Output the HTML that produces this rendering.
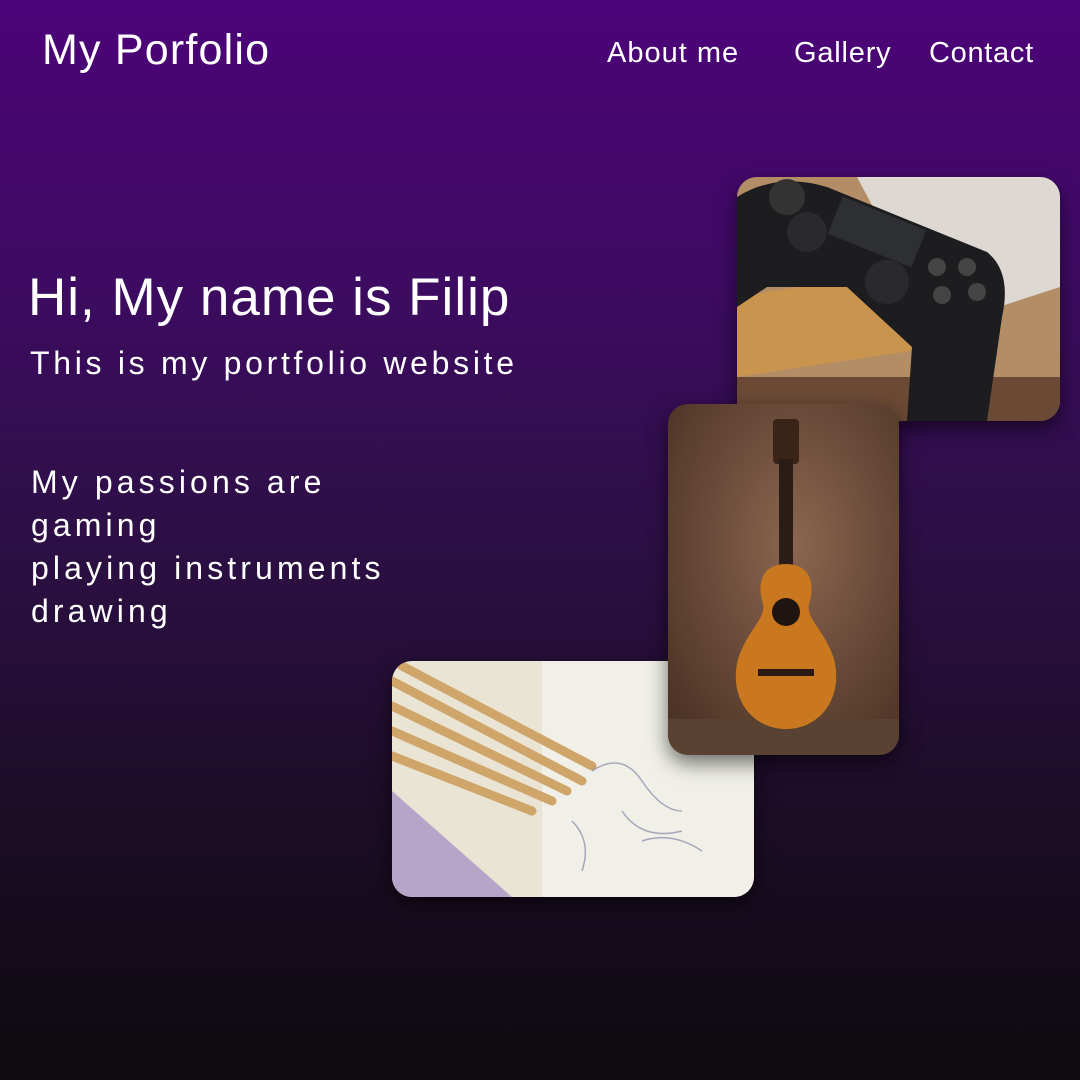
<!DOCTYPE html>
<html><head><style>
html,body{margin:0;padding:0}
body{width:1080px;height:1080px;overflow:hidden;position:relative;background:linear-gradient(180deg,#4d0379 0%,#3e0b63 25%,#2d0f45 50%,#1c0d27 75%,#0d0b0e 100%);font-family:"Liberation Sans",sans-serif;color:#fff}
.t{position:absolute;white-space:nowrap;margin:0}
.card{position:absolute;border-radius:20px;overflow:hidden;box-shadow:0 8px 20px rgba(0,0,0,.55)}
.card svg{display:block}
</style></head><body>
<div class="t" style="left:42px;top:26px;font-size:43px;letter-spacing:1.2px">My Porfolio</div>
<div class="t" style="left:607px;top:37px;font-size:29px;letter-spacing:1px">About me</div>
<div class="t" style="left:794px;top:37px;font-size:29px;letter-spacing:0.8px">Gallery</div>
<div class="t" style="left:929px;top:37px;font-size:29px;letter-spacing:0.7px">Contact</div>
<div class="t" style="left:28px;top:267px;font-size:53px;letter-spacing:1px">Hi, My name is Filip</div>
<div class="t" style="left:30px;top:345px;font-size:32px;letter-spacing:3.7px">This is my portfolio website</div>
<div class="t" style="left:31px;top:461px;font-size:32px;letter-spacing:4.1px;line-height:43px">My passions are<br>gaming<br>playing instruments<br>drawing</div>

<div class="card" style="left:392px;top:661px;width:362px;height:236px;z-index:1">
<svg width="362" height="236"><rect width="362" height="236" fill="#e9e4d4"/>
<rect x="150" width="212" height="236" fill="#f0f0e8"/>
<polygon points="0,130 0,236 120,236" fill="#b6a5c8"/>
<g stroke="#cfa56a" stroke-width="9" stroke-linecap="round">
<line x1="0" y1="20" x2="190" y2="120"/><line x1="0" y1="45" x2="175" y2="130"/><line x1="0" y1="70" x2="160" y2="140"/><line x1="10" y1="5" x2="200" y2="105"/><line x1="0" y1="95" x2="140" y2="150"/></g>
<g stroke="#8a84a8" stroke-width="1.5" fill="none" opacity=".7"><path d="M200 110 q30 -20 50 10 t40 30 M230 150 q20 30 60 20 M250 180 q30 -10 60 10 M180 160 q20 20 10 50"/></g>
</svg></div>

<div class="card" style="left:737px;top:177px;width:323px;height:244px;z-index:2">
<svg width="323" height="244"><rect width="323" height="244" fill="#b38d66"/>
<polygon points="120,0 323,0 323,110 200,150" fill="#ddd9d2"/>
<polygon points="0,120 120,100 200,170 0,200" fill="#c8944e"/>
<rect y="200" width="323" height="44" fill="#6b4a35"/>
<path d="M0 20 Q40 -5 90 10 L250 75 Q275 95 265 140 L250 244 L170 244 L175 170 L110 110 L30 110 L0 130 Z" fill="#1d1d1f"/>
<circle cx="50" cy="20" r="18" fill="#333"/><circle cx="70" cy="55" r="20" fill="#2a2a2c"/><circle cx="150" cy="105" r="22" fill="#2a2a2c"/>
<rect x="95" y="35" width="90" height="40" fill="#2e2f33" transform="rotate(22 140 55)"/>
<circle cx="200" cy="90" r="9" fill="#444"/><circle cx="230" cy="90" r="9" fill="#444"/><circle cx="205" cy="118" r="9" fill="#444"/><circle cx="240" cy="115" r="9" fill="#444"/>
</svg></div>

<div class="card" style="left:668px;top:404px;width:231px;height:351px;z-index:3">
<svg width="231" height="351"><defs><radialGradient id="w" cx=".55" cy=".4" r=".7"><stop offset="0" stop-color="#8a6650"/><stop offset="1" stop-color="#4e3426"/></radialGradient></defs>
<rect width="231" height="351" fill="url(#w)"/>
<rect y="315" width="231" height="36" fill="#5a4232"/>
<rect x="105" y="15" width="26" height="45" rx="4" fill="#3a2418"/>
<rect x="111" y="55" width="14" height="150" fill="#2a1c16"/>
<path d="M118 160 C95 160 88 178 95 200 C98 215 80 225 70 255 C60 295 85 325 118 325 C151 325 176 295 166 255 C156 225 138 215 141 200 C148 178 141 160 118 160Z" fill="#c9781f"/>
<circle cx="118" cy="208" r="14" fill="#1f1410"/>
<rect x="90" y="265" width="56" height="7" fill="#2a1a12"/>
</svg></div>
</body></html>
